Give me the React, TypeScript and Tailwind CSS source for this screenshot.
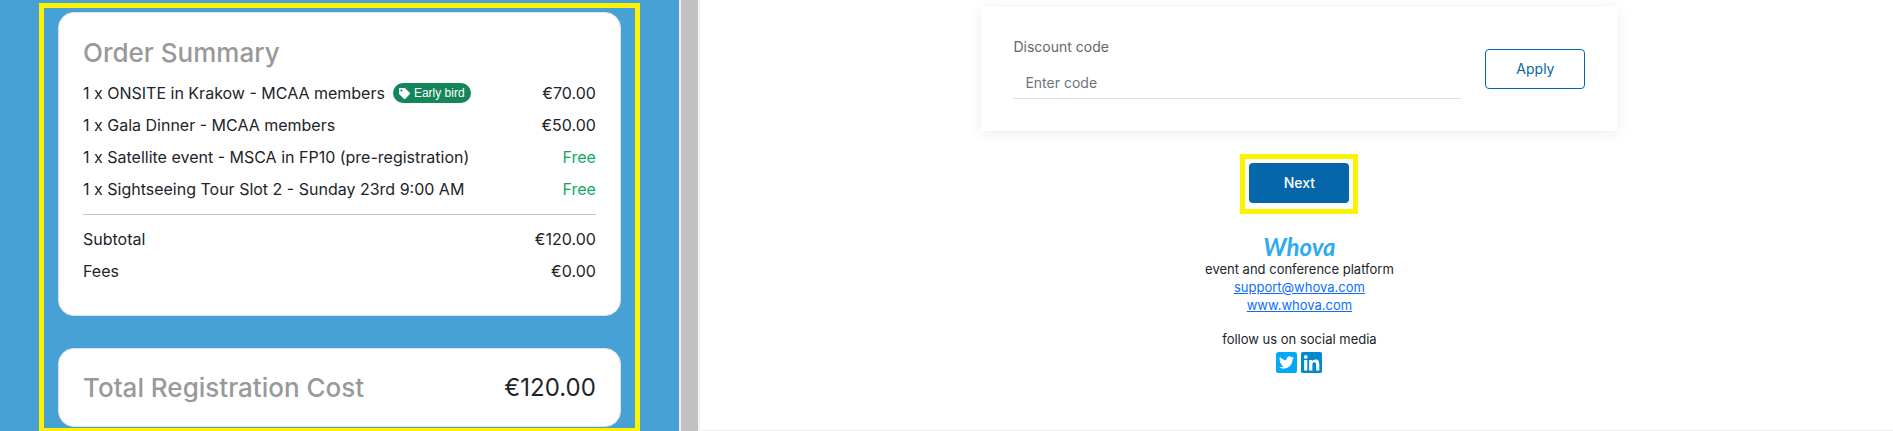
import { FaTag } from "react-icons/fa";

type Line = {
  label: string;
  amount: string;
  free?: boolean;
  badge?: string;
};

const items: Line[] = [
  { label: "1 x ONSITE in Krakow - MCAA members", amount: "€70.00", badge: "Early bird" },
  { label: "1 x Gala Dinner - MCAA members", amount: "€50.00" },
  { label: "1 x Satellite event - MSCA in FP10 (pre-registration)", amount: "Free", free: true },
  { label: "1 x Sightseeing Tour Slot 2 - Sunday 23rd 9:00 AM", amount: "Free", free: true },
];

const totals: Line[] = [
  { label: "Subtotal", amount: "€120.00" },
  { label: "Fees", amount: "€0.00" },
];

function SummaryLine({ line }: { line: Line }) {
  return (
    <li className="flex items-center justify-between leading-8">
      <span className="flex items-center gap-2 whitespace-nowrap">
        {line.label}
        {line.badge && (
          <span className="flex h-5 items-center gap-1 rounded-full bg-[#15865a] px-1.5 font-['Liberation_Sans',sans-serif] text-xs text-white">
            <FaTag className="size-[11px]" />
            {line.badge}
          </span>
        )}
      </span>
      <span className={line.free ? "text-[#0fa968]" : ""}>{line.amount}</span>
    </li>
  );
}

function OrderSummary() {
  return (
    <section className="bg-[#48a1d5] px-[39px] pt-[3px]">
      <div className="border-5 border-b-3 border-[#fff200] px-3.5 pt-1 pb-px">
        <div className="rounded-2xl border border-[#dee2e6] bg-white px-6 pt-5 pb-7">
          <h2 className="mb-1 text-[26px] leading-10 font-medium text-[#999]">Order Summary</h2>
          <ul>
            {items.map((line) => (
              <SummaryLine key={line.label} line={line} />
            ))}
          </ul>
          <hr className="mt-[9px] mb-2 border-[#c4c4c4]" />
          <ul>
            {totals.map((line) => (
              <SummaryLine key={line.label} line={line} />
            ))}
          </ul>
        </div>
        <div className="mt-8 flex items-center justify-between rounded-2xl border border-[#dee2e6] bg-white px-6 py-5 leading-[37px]">
          <h2 className="text-[26px] font-medium text-[#999]">Total Registration Cost</h2>
          <span className="text-2xl leading-[37px]">€120.00</span>
        </div>
      </div>
    </section>
  );
}

function DiscountCard() {
  return (
    <form className="flex w-full max-w-[636px] items-center gap-6 bg-white p-8 text-sm shadow-[0_2px_14px_rgba(0,0,0,0.08)]">
      <div className="flex-1">
        <label htmlFor="discount" className="block leading-4 text-[#666]">
          Discount code
        </label>
        <input
          id="discount"
          type="text"
          placeholder="Enter code"
          className="mt-3 block h-8 w-full border-b border-[#dfdfdf] px-3 outline-none placeholder:text-[#6c757d]"
        />
      </div>
      <button type="button" className="h-10 w-25 rounded border border-[#0566a9] text-[#0566a9]">
        Apply
      </button>
    </form>
  );
}

function TwitterIcon() {
  return (
    <svg viewBox="0 0 24 24" className="size-[21px]">
      <rect width="24" height="24" rx="3" fill="#03a9f4" />
      <path
        fill="#fff"
        transform="translate(3.4 3.4) scale(0.72)"
        d="M23.95 4.57a10 10 0 0 1-2.82.77 4.96 4.96 0 0 0 2.16-2.72c-.95.55-2 .95-3.13 1.18a4.92 4.92 0 0 0-8.38 4.48C7.69 8.1 4.07 6.13 1.64 3.16a4.92 4.92 0 0 0 1.52 6.57 4.9 4.9 0 0 1-2.23-.61v.06a4.92 4.92 0 0 0 3.95 4.83 5 5 0 0 1-2.21.08 4.94 4.94 0 0 0 4.6 3.42A9.87 9.87 0 0 1 0 19.54a14 14 0 0 0 7.55 2.21c9.05 0 14-7.5 14-13.98 0-.21 0-.42-.02-.63a9.94 9.94 0 0 0 2.42-2.57z"
      />
    </svg>
  );
}

function LinkedinIcon() {
  return (
    <svg viewBox="0 0 24 24" className="size-[21px]">
      <rect width="24" height="24" rx="2" fill="#0288d1" />
      <g fill="#fff">
        <circle cx="5.4" cy="5.6" r="2.1" />
        <path d="M3.6 9h3.6v12H3.6zM9.3 9h3.5v1.7c.6-1.1 1.9-2 3.7-2 3.7 0 4.4 2.4 4.4 5.6V21h-3.6v-6c0-1.5 0-3.2-2-3.2s-2.3 1.5-2.3 3.1V21H9.3z" />
      </g>
    </svg>
  );
}

function Footer() {
  return (
    <footer className="mt-5 flex flex-col items-center text-[13px] leading-[18px]">
      <div className="font-['Lato',sans-serif] text-2xl leading-[26px] font-bold text-[#2dabee] italic">Whova</div>
      <p>event and conference platform</p>
      <a href="mailto:support@whova.com" className="text-[#0d6efd] underline">
        support@whova.com
      </a>
      <a href="https://whova.com" className="text-[#0d6efd] underline">
        www.whova.com
      </a>
      <p className="mt-4">follow us on social media</p>
      <div className="mt-1 flex gap-1">
        <a href="https://twitter.com/whova" aria-label="Twitter">
          <TwitterIcon />
        </a>
        <a href="https://linkedin.com/company/whova" aria-label="LinkedIn">
          <LinkedinIcon />
        </a>
      </div>
    </footer>
  );
}

export default function App() {
  return (
    <main className="grid min-h-screen grid-cols-[33fr_21px_58fr] bg-white font-['Inter',sans-serif] text-base text-[#212529]">
      <OrderSummary />
      <div className="border-x-2 border-[#f1f1f1] bg-[#c1c1c1]" />
      <section className="flex flex-col items-center border-b border-[#eee] pt-[7px] pl-1.5">
        <DiscountCard />
        <div className="mt-[23px] border-5 border-[#fff200] px-1 pt-1 pb-1.5">
          <button type="button" className="block h-10 w-25 rounded bg-[#0566a9] text-sm font-medium text-white">
            Next
          </button>
        </div>
        <Footer />
      </section>
    </main>
  );
}
